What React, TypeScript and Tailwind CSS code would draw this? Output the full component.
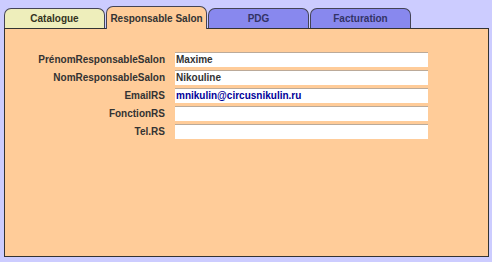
import React from 'react';

interface Field {
    label: string
    value: string
    link?: boolean
}

const fields: Field[] = [
    { label: 'PrénomResponsableSalon', value: 'Maxime' },
    { label: 'NomResponsableSalon', value: 'Nikouline' },
    { label: 'EmailRS', value: 'mnikulin@circusnikulin.ru', link: true },
    { label: 'FonctionRS', value: '' },
    { label: 'Tel.RS', value: '' },
];

const tabs = [
    { name: 'Catalogue', cls: 'bg-[#eeeebb] mt-[8px] h-[20px] text-[#333322]' },
    { name: 'Responsable Salon', cls: 'bg-[#ffcc99] mt-[6px] h-[23px] relative z-10' },
    { name: 'PDG', cls: 'bg-[#8888ee] mt-[8px] h-[20px] text-[#333366]' },
    { name: 'Facturation', cls: 'bg-[#8888ee] mt-[8px] h-[20px] text-[#333366]' },
];

const App: React.FC = () => {
    return (
        <div className="w-[492px] h-[262px] bg-[#ccccff] font-['Liberation_Sans',sans-serif] text-[10px] font-bold text-[#333333] pl-[4px] pr-[3px]">
            <div className="flex items-start h-[28px] gap-[1px]">
                {tabs.map((t) => (
                    <div
                        key={t.name}
                        className={`w-[101px] whitespace-nowrap rounded-t-[7px] border border-b-0 border-[#444455] flex items-center justify-center ${t.cls}`}
                    >
                        {t.name}
                    </div>
                ))}
            </div>
            <div className="h-[229px] bg-[#ffcc99] border border-[#333333] pt-[21px]">
                {fields.map((f) => (
                    <div key={f.label} className="flex items-center h-[18px]">
                        <span className="w-[170px] text-right pr-[10px]">{f.label}</span>
                        <div className={`w-[253px] h-[15px] bg-white border-t border-[#bbaa99] px-[1px] leading-[14px] ${f.link ? 'text-[#000099]' : ''}`}>
                            {f.value}
                        </div>
                    </div>
                ))}
            </div>
        </div>
    );
}
export default App;
